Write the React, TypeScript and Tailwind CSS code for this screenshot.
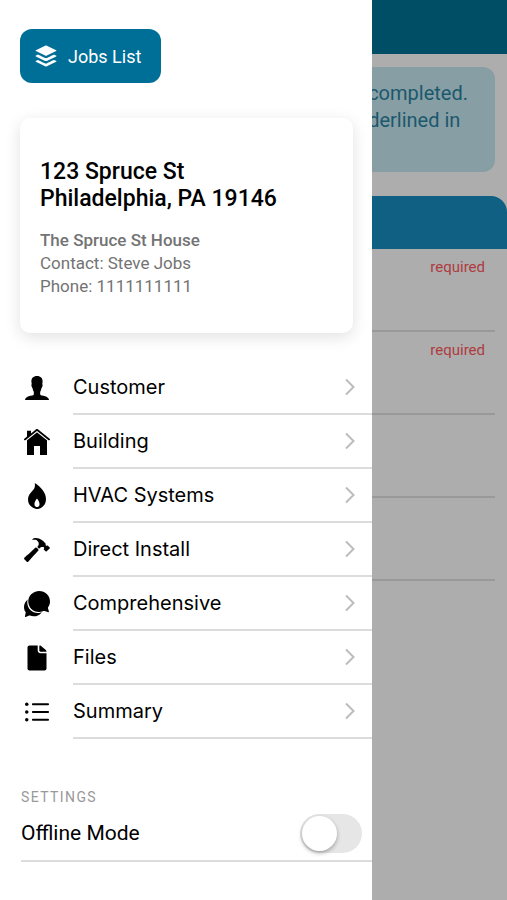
import { useState } from "react";
import {
    IoIosPerson,
    IoIosHome,
    IoIosFlame,
    IoIosHammer,
    IoIosChatbubbles,
    IoIosDocument,
    IoIosList,
    IoLogoBuffer,
} from "react-icons/io";

const menuItems = [
    { label: "Customer", icon: IoIosPerson },
    { label: "Building", icon: IoIosHome },
    { label: "HVAC Systems", icon: IoIosFlame },
    { label: "Direct Install", icon: IoIosHammer },
    { label: "Comprehensive", icon: IoIosChatbubbles },
    { label: "Files", icon: IoIosDocument },
    { label: "Summary", icon: IoIosList },
];

const fields = [
    { id: "field-1", required: true },
    { id: "field-2", required: true },
    { id: "field-3", required: false },
    { id: "field-4", required: false },
];

function Chevron() {
    return (
        <svg viewBox="0 0 12 20" className="w-3 h-5 shrink-0" fill="none" stroke="#bcbcbc" strokeWidth="2">
            <path d="M2 2.5 L9.5 10 L2 17.5" />
        </svg>
    );
}

function AddressCard() {
    return (
        <section className="mt-[35px] mr-[19px] rounded-[10px] bg-white px-5 pt-10 pb-[35px] shadow-[0_4px_16px_rgba(0,0,0,0.12)]">
            <h1 className="text-[23px] leading-[27px] font-medium text-black">
                123 Spruce St
                <br />
                Philadelphia, PA 19146
            </h1>
            <div className="mt-[17px] text-[17px] leading-[23px] text-[#737373]">
                <p className="font-medium">The Spruce St House</p>
                <p>Contact: Steve Jobs</p>
                <p>Phone: 1111111111</p>
            </div>
        </section>
    );
}

function Menu() {
    return (
        <nav className="mt-7 pl-px">
            {menuItems.map(({ label, icon: Icon }) => (
                <a key={label} href="#" className="flex h-[54px] items-center text-black">
                    <Icon className="size-8 shrink-0" />
                    <span className="ml-5 flex h-full flex-1 items-center justify-between border-b-2 border-[#dcdcdc] pr-4 font-['Inter',sans-serif] text-[20px]">
                        {label}
                        <Chevron />
                    </span>
                </a>
            ))}
        </nav>
    );
}

function Settings() {
    const [offline, setOffline] = useState(false);

    return (
        <section className="mt-12 pl-px">
            <h2 className="text-[14px] leading-5 tracking-widest text-[#999999]">SETTINGS</h2>
            <label className="flex h-[55px] items-center justify-between border-b-2 border-[#dcdcdc] pr-2.5 text-[21px] text-black">
                Offline Mode
                <input
                    type="checkbox"
                    role="switch"
                    checked={offline}
                    onChange={(e) => setOffline(e.target.checked)}
                    className="h-[39px] w-[62px] appearance-none rounded-full bg-[#e6e6e6] p-0.5 before:block before:size-[35px] before:rounded-full before:bg-white before:shadow-[0_2px_4px_rgba(0,0,0,0.3)] checked:bg-[#006f98] checked:before:ml-[23px]"
                />
            </label>
        </section>
    );
}

export default function App() {
    return (
        <div className="flex min-h-screen bg-[#adadad] font-['Roboto',sans-serif]">

            {/* Drawer */}
            <aside className="w-[73.4%] shrink-0 bg-white pl-5 pt-[29px]">
                <button className="flex h-[54px] items-center gap-2 rounded-xl bg-[#006f98] pr-5 pl-3 text-[18px] text-white">
                    <IoLogoBuffer className="size-7" />
                    Jobs List
                </button>
                <AddressCard />
                <Menu />
                <Settings />
            </aside>

            {/* Dimmed form */}
            <main className="min-w-0 flex-1 overflow-hidden">
                <header className="h-[54px] bg-[#004d66]" />
                <div className="mt-[13px] mr-3 h-[105px] rounded-r-xl bg-[#879fa4] pt-[13px] text-[20px] leading-[27px] text-[#1b586d]">
                    <p className="-ml-1 whitespace-nowrap">
                        completed.
                        <br />
                        derlined in
                    </p>
                </div>
                <div className="mt-6 h-[53px] rounded-tr-2xl bg-[#0f6083]" />
                {fields.map((field) => (
                    <div key={field.id} className="mr-3 flex h-[83px] flex-col border-b-2 border-[#999999] pt-2 pr-2.5">
                        {field.required && (
                            <label htmlFor={field.id} className="text-right text-[15px] leading-5 text-[#ad3c3f]">
                                required
                            </label>
                        )}
                        <input id={field.id} aria-label="Answer" className="w-full flex-1 bg-transparent outline-none" />
                    </div>
                ))}
            </main>

        </div>
    );
}
